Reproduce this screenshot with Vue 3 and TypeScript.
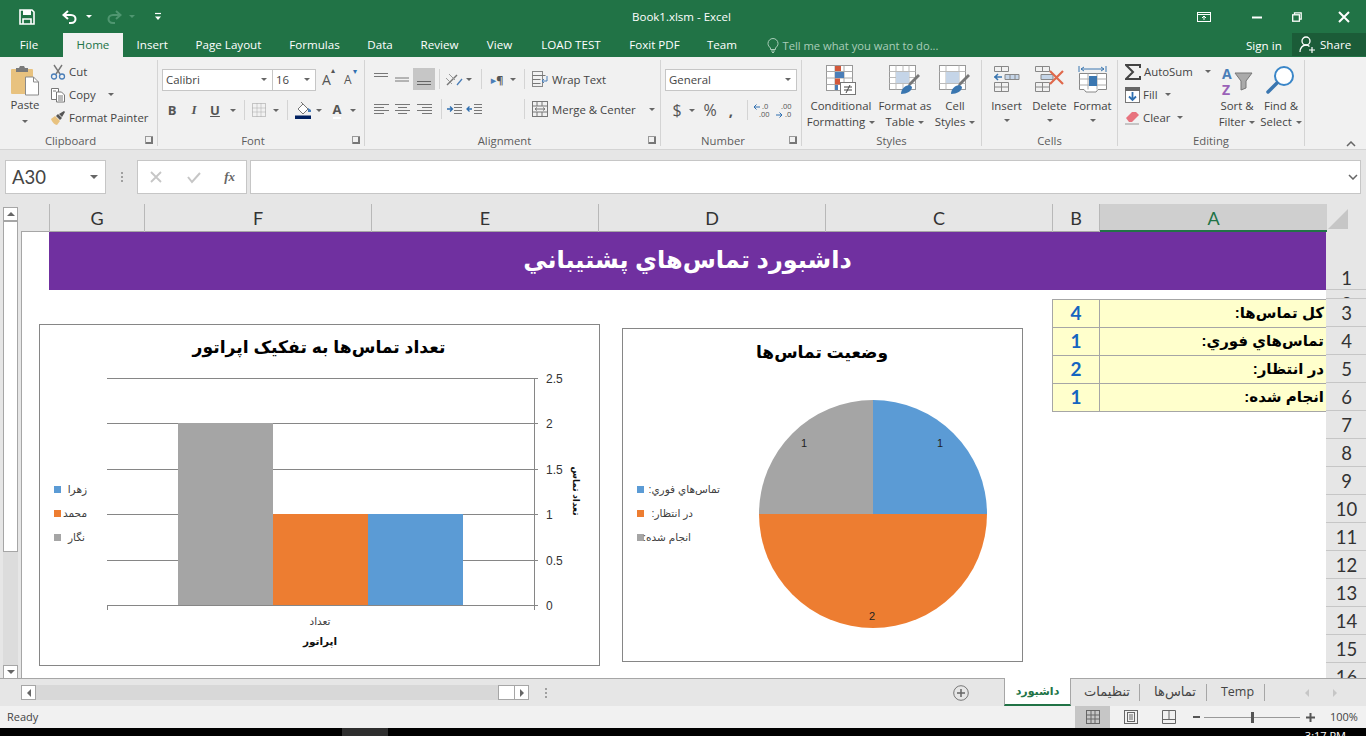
<script setup lang="ts">
const tabs: string[] = ['File', 'Home', 'Insert', 'Page Layout', 'Formulas', 'Data', 'Review', 'View', 'LOAD TEST', 'Foxit PDF', 'Team']
const columns: string[] = ['', 'G', 'F', 'E', 'D', 'C', 'B', 'A']
const rows: number[] = [1, 2, 3, 4, 5, 6, 7, 8, 9, 10, 11, 12, 13, 14, 15, 16]
const kpis = [
  { label: 'کل تماس‌ها:', value: 4 },
  { label: 'تماس‌هاي فوري:', value: 1 },
  { label: 'در انتظار:', value: 2 },
  { label: 'انجام شده:', value: 1 },
]
const gridY: number[] = [378, 423, 469, 514, 560, 605]
const axisLabels: string[] = ['2.5', '2', '1.5', '1', '0.5', '0']
</script>

<template>
  <div class="app">
    <header class="titlebar">
      <div class="qat">
        <svg class="q-save" width="16" height="16" viewBox="0 0 16 16"><path d="M1 1h12l2 2v12H1z" fill="none" stroke="#fff" stroke-width="1.6"/><path d="M4 1h8v5H4z" fill="#fff"/><path d="M4 15v-5h8v5" fill="none" stroke="#fff" stroke-width="1.6"/></svg>
        <svg class="q-undo" width="16" height="14" viewBox="0 0 16 14"><path d="M6 1L1.5 5 6 9" fill="none" stroke="#fff" stroke-width="2"/><path d="M2 5h7c6 0 6 8 0 8H7" fill="none" stroke="#fff" stroke-width="2"/></svg>
        <i class="caret white q-c1"></i>
        <svg class="q-redo" width="16" height="14" viewBox="0 0 16 14"><path d="M10 1l4.500 4L10 9" fill="none" stroke="#4f9670" stroke-width="2"/><path d="M14 5H7c-6 0-6 8 0 8h2" fill="none" stroke="#4f9670" stroke-width="2"/></svg>
        <i class="caret faded q-c2"></i>
        <svg class="q-more" width="8" height="10" viewBox="0 0 8 10"><path d="M1 1.500h6" stroke="#fff" stroke-width="1.200"/><path d="M1 4.500h6L4 8z" fill="#fff"/></svg>
      </div>
      <div class="doc-title">Book1.xlsm - Excel</div>
      <div class="winbtns">
        <svg class="w-rib" width="14" height="10" viewBox="0 0 14 10"><rect x=".5" y=".5" width="13" height="9" fill="none" stroke="#fff"/><path d="M1 2.500h12" stroke="#fff"/><path d="M7 8V4.500M5 6l2-2 2 2" fill="none" stroke="#fff"/></svg>
        <svg class="w-min" width="10" height="3" viewBox="0 0 10 3"><path d="M0 1.500h10" stroke="#fff" stroke-width="2"/></svg>
        <svg class="w-res" width="10" height="10" viewBox="0 0 10 10"><path d="M2.500 2.500V.8h6.700v6.400H7.500" fill="none" stroke="#fff" stroke-width="1.300"/><rect x=".7" y="2.800" width="6.700" height="6.400" fill="none" stroke="#fff" stroke-width="1.300"/></svg>
        <svg class="w-close" width="12" height="12" viewBox="0 0 12 12"><path d="M1 1l10 10M11 1L1 11" stroke="#fff" stroke-width="2"/></svg>
      </div>
    </header>

    <nav class="tabbar">
      <div v-for="t in tabs" :key="t" class="tab" :class="{ active: t === 'Home', file: t === 'File' }">{{ t }}</div>
      <svg class="bulb" width="12" height="15" viewBox="0 0 12 15"><path d="M3.500 10C2 8.500 1 7.500 1 5.500a5 5 0 0 1 10 0c0 2-1 3-2.500 4.500v1.500h-5z" fill="none" stroke="#a9cdb9"/><path d="M4 13h4M5 14.500h2" stroke="#a9cdb9"/></svg>
      <div class="tell">Tell me what you want to do...</div>
      <div class="signin">Sign in</div>
      <div class="share">
        <svg width="18" height="17" viewBox="0 0 18 17"><circle cx="7" cy="5" r="4" fill="none" stroke="#fff" stroke-width="1.300"/><path d="M1 16c0-4 2.500-7 6-7 1.500 0 2.500.5 3.500 1.500" fill="none" stroke="#fff" stroke-width="1.300"/><path d="M10 14h6M13 11v6" stroke="#fff" stroke-width="1.200"/></svg>
        <span>Share</span>
      </div>
    </nav>

    <section class="ribbon">
      <!-- Clipboard -->
      <div class="group g-clip">
        <div class="body clip-body">
          <div class="big paste">
            <svg width="30" height="31" viewBox="0 0 30 31"><rect x="1" y="4" width="22" height="25" rx="1" fill="#e8c27f"/><path d="M6 3h3l1-2h4l1 2h3v4H6z" fill="#7a7a7a"/><path d="M15.500 12h8l5 5v13h-13z" fill="#fff" stroke="#8a8a8a"/><path d="M23.500 12v5h5" fill="none" stroke="#8a8a8a"/></svg>
            <span class="paste-label">Paste</span>
            <i class="caret"></i>
          </div>
          <div class="clip-list">
            <div class="clip-row">
              <svg width="16" height="16" viewBox="0 0 16 16"><path d="M4 1l6 9M12 1L6 10" stroke="#777" stroke-width="1.400"/><circle cx="4" cy="12.500" r="2.500" fill="none" stroke="#4a7eb8" stroke-width="1.300"/><circle cx="12" cy="12.500" r="2.500" fill="none" stroke="#4a7eb8" stroke-width="1.300"/></svg>
              <span>Cut</span>
            </div>
            <div class="clip-row">
              <svg width="16" height="16" viewBox="0 0 16 16"><path d="M1.500 1.500h7v11h-7z" fill="#fff" stroke="#777"/><path d="M6.500 5h5l3 3v7h-8z" fill="#fff" stroke="#777"/><path d="M8 9h5M8 11h5M8 13h5M3 4h3" stroke="#777"/></svg>
              <span>Copy</span>
              <i class="caret copy-caret"></i>
            </div>
            <div class="clip-row">
              <svg width="16" height="16" viewBox="0 0 16 16"><path d="M1 9l4-3 5 5-3 4c-2 0-5-3-6-6z" fill="#e8c27f"/><path d="M6 6l2-2 4 4-2 2z" fill="#555"/><path d="M9 4l5-3 1 1-3 5z" fill="#555"/></svg>
              <span>Format Painter</span>
            </div>
          </div>
        </div>
        <div class="glabel">Clipboard</div>
        <i class="launch"></i>
      </div>

      <!-- Font -->
      <div class="group g-font">
        <div class="body stack">
          <div class="font-r1">
            <div class="combo font-name"><span>Calibri</span><i class="caret"></i></div>
            <div class="combo font-size"><span>16</span><i class="caret"></i></div>
            <span class="grow-a">A<sup>▴</sup></span>
            <span class="shrink-a">A<sup class="blue">▾</sup></span>
          </div>
          <div class="font-r2">
            <b class="fmt">B</b>
            <i class="fmt ital">I</i>
            <u class="fmt und">U</u>
            <i class="caret"></i>
            <i class="vsep"></i>
            <svg width="14" height="14" viewBox="0 0 14 14"><rect x=".5" y=".5" width="13" height="13" fill="none" stroke="#999" stroke-dasharray="1 1"/><path d="M.5 5h13M.5 9h13M5 .5v13M9 .5v13" stroke="#aaa" stroke-dasharray="1 1"/></svg>
            <i class="caret"></i>
            <i class="vsep"></i>
            <svg width="17" height="18" viewBox="0 0 17 18"><path d="M3 8l5-5 5 5-5 5z" fill="#fff" stroke="#777"/><path d="M6 1l2 2" stroke="#777"/><path d="M13 7l3 2v2h-3z" fill="#4a7eb8"/><rect y="14.500" width="16" height="3.500" fill="#002060"/></svg>
            <i class="caret"></i>
            <span class="color-a">A</span>
            <i class="caret"></i>
          </div>
        </div>
        <div class="glabel">Font</div>
        <i class="launch"></i>
      </div>

      <!-- Alignment -->
      <div class="group g-align">
        <div class="body stack">
          <div class="al-r1">
            <svg class="lines" width="14" height="14" viewBox="0 0 14 14"><path d="M0 1.500h14M0 4.500h14" stroke="#777"/></svg>
            <svg class="lines" width="14" height="14" viewBox="0 0 14 14"><path d="M0 6h14M0 9h14" stroke="#777"/></svg>
            <div class="sel-cell"><svg width="14" height="14" viewBox="0 0 14 14"><path d="M0 9.500h14M0 12.500h14" stroke="#666"/></svg></div>
            <i class="vsep"></i>
            <svg width="18" height="15" viewBox="0 0 18 15"><path d="M2 13L12 3" stroke="#777" stroke-width="1.500"/><path d="M1 6l6 6M4 2l6 6" stroke="#999"/><path d="M12 13l5-6" stroke="#4a7eb8" stroke-width="1.300"/></svg>
            <i class="caret"></i>
            <i class="vsep"></i>
            <span class="rtl"><em>▸</em>¶</span>
            <i class="caret"></i>
            <i class="vsep"></i>
            <div class="ico-text">
              <svg width="16" height="16" viewBox="0 0 16 16"><rect x=".5" y=".5" width="10" height="15" fill="none" stroke="#888"/><path d="M.5 4.500h13M.5 8.500h8M.5 12.500h8" stroke="#777"/><path d="M15 5v5h-5M12 8l-2 2 2 2" fill="none" stroke="#4a7eb8"/></svg>
              <span>Wrap Text</span>
            </div>
          </div>
          <div class="al-r2">
            <svg width="15" height="13" viewBox="0 0 15 13"><path d="M0 1.500h15M0 4.500h10M0 7.500h15M0 10.500h10" stroke="#777"/></svg>
            <svg width="15" height="13" viewBox="0 0 15 13"><path d="M0 1.500h15M3 4.500h9M0 7.500h15M3 10.500h9" stroke="#777"/></svg>
            <svg width="15" height="13" viewBox="0 0 15 13"><path d="M0 1.500h15M5 4.500h10M0 7.500h15M5 10.500h10" stroke="#777"/></svg>
            <i class="vsep"></i>
            <svg width="15" height="13" viewBox="0 0 15 13"><path d="M7 1.500h8M7 4.500h8M7 7.500h8M7 10.500h8" stroke="#777"/><path d="M0 6h5M3 3.500L5.500 6 3 8.500" fill="none" stroke="#2f6fb0" stroke-width="1.300"/></svg>
            <svg width="16" height="13" viewBox="0 0 16 13"><path d="M8 1.500h8M8 4.500h8M8 7.500h8M8 10.500h8" stroke="#777"/><path d="M6 6H1M3.500 3.500L1 6l2.500 2.500" fill="none" stroke="#2f6fb0" stroke-width="1.300"/></svg>
            <span></span>
            <i class="vsep"></i>
            <div class="ico-text">
              <svg width="16" height="16" viewBox="0 0 16 16"><rect x=".5" y=".5" width="15" height="15" fill="none" stroke="#777"/><path d="M.5 5h15M.5 11h15M5 .5V5M10 .5V5M5 11v4.500M10 11v4.500" stroke="#777"/><path d="M3 8h10M5 6.500L3 8l2 1.500M11 6.500L13 8l-2 1.500" fill="none" stroke="#777"/></svg>
              <span>Merge &amp; Center</span>
              <i class="caret merge-caret"></i>
            </div>
          </div>
        </div>
        <div class="glabel">Alignment</div>
        <i class="launch"></i>
      </div>

      <!-- Number -->
      <div class="group g-num">
        <div class="body stack">
          <div class="num-r1"><div class="combo num-fmt"><span>General</span><i class="caret"></i></div></div>
          <div class="num-r2">
            <span class="sym dollar">$</span>
            <i class="caret"></i>
            <span class="sym pct">%</span>
            <span class="sym comma">,</span>
            <i class="vsep"></i>
            <svg width="18" height="20" viewBox="0 0 18 20"><text x="8" y="9" class="dec">.0</text><text x="5" y="17" class="dec">.00</text><path d="M0 7h6M2.500 4.500L0 7l2.500 2.500" fill="none" stroke="#2f6fb0"/></svg>
            <svg width="18" height="20" viewBox="0 0 18 20"><text x="5" y="9" class="dec">.00</text><text x="9" y="17" class="dec">.0</text><path d="M0 15h6M3.500 12.500L6 15l-2.500 2.500" fill="none" stroke="#2f6fb0"/></svg>
          </div>
        </div>
        <div class="glabel">Number</div>
        <i class="launch"></i>
      </div>

      <!-- Styles -->
      <div class="group g-styles">
        <div class="body bigs styles-body">
          <div class="big cond">
            <svg width="30" height="30" viewBox="0 0 30 30"><rect x=".5" y=".5" width="26" height="25" fill="#fff" stroke="#999"/><path d="M.5 6.500h26M.5 13h26M.5 19.500h26M9 .5v25M18 .5v25" stroke="#aaa"/><path d="M9 1h6v5H9z" fill="#d2583b"/><path d="M9 7h9v6H9z" fill="#4a7eb8"/><path d="M9 13.500h5v6H9z" fill="#d2583b"/><path d="M9 20h3v5H9z" fill="#4a7eb8"/><rect x="14.500" y="17.500" width="15" height="12" fill="#fff" stroke="#777"/><path d="M18 22h8M18 25h8M24 20l-4 8" stroke="#444"/></svg>
            <span>Conditional</span>
            <span>Formatting<i class="caret inl"></i></span>
          </div>
          <div class="big fmt-table">
            <svg width="32" height="30" viewBox="0 0 32 30"><rect x=".5" y=".5" width="26" height="24" fill="#fff" stroke="#999"/><path d="M.5 6.500h26M.5 12.500h26M.5 18.500h26M7 .5v24M14 .5v24M20 .5v24" stroke="#bbb"/><path d="M7 7h13v11H7z" fill="#c5d5e8"/><path d="M29 9L20 18l-1 3 3-1 9-9z" fill="#777"/><path d="M12 29c0-5 4-9 9-9l2 2c0 4-5 7-11 7z" fill="#3a76b0"/></svg>
            <span>Format as</span>
            <span>Table<i class="caret inl"></i></span>
          </div>
          <div class="big cellst">
            <svg width="32" height="30" viewBox="0 0 32 30"><rect x=".5" y=".5" width="26" height="24" fill="#fff" stroke="#999"/><path d="M.5 6.500h26M7 .5v24M20 .5v24M.5 18.500h26" stroke="#bbb"/><path d="M7 7h13v11H7z" fill="#c5d5e8"/><path d="M29 9L20 18l-1 3 3-1 9-9z" fill="#777"/><path d="M12 29c0-5 4-9 9-9l2 2c0 4-5 7-11 7z" fill="#3a76b0"/></svg>
            <span>Cell</span>
            <span>Styles<i class="caret inl"></i></span>
          </div>
        </div>
        <div class="glabel">Styles</div>
      </div>

      <!-- Cells -->
      <div class="group g-cells">
        <div class="body bigs cells-body">
          <div class="big c-ins">
            <svg width="28" height="28" viewBox="0 0 28 28"><path d="M1.500 1.500h14v5h-14zM8.500 1.500v5M1.500 17.500h14v9h-14zM1.500 22h14M8.500 17.500v9" fill="none" stroke="#888"/><path d="M12 9.500h14v5H12zM17 9.500v5M22 9.500v5" fill="#c5d5e8" stroke="#888"/><path d="M1 12h8M5 9l-3 3 3 3" fill="none" stroke="#3a76b0" stroke-width="1.500"/></svg>
            <span>Insert</span><i class="caret"></i>
          </div>
          <div class="big c-del">
            <svg width="32" height="28" viewBox="0 0 32 28"><path d="M1.500 1.500h14v5h-14zM8.500 1.500v5M1.500 17.500h14v9h-14zM1.500 22h14M8.500 17.500v9" fill="none" stroke="#888"/><path d="M7 9.500h12v5H7z" fill="#c5d5e8" stroke="#888"/><path d="M16 6l13 13M29 6L16 19" stroke="#e0684b" stroke-width="2.200"/></svg>
            <span>Delete</span><i class="caret"></i>
          </div>
          <div class="big c-fmt">
            <svg width="30" height="30" viewBox="0 0 30 30"><path d="M1 1v6M28 1v6M3 4h23M3 4l3-2M3 4l3 2M26 4l-3-2M26 4l-3 2" fill="none" stroke="#3a76b0"/><path d="M1.500 8.500h27v16H20l-2 2.500H8l-2-2.500H1.500z" fill="#fff" stroke="#888"/><path d="M1.500 14h27M1.500 20h27M10 8.500v16M19 8.500v16" stroke="#aaa"/><rect x="11" y="11" width="8" height="10" fill="#3a76b0"/></svg>
            <span class="fmt-lab">Format</span><i class="caret"></i>
          </div>
        </div>
        <div class="glabel">Cells</div>
      </div>

      <!-- Editing -->
      <div class="group g-edit">
        <div class="body edit-body">
          <div class="clip-list edit-list">
            <div class="clip-row">
              <svg width="16" height="16" viewBox="0 0 16 16"><path d="M15 4V1H1l7 7-7 7h14v-3" fill="none" stroke="#444" stroke-width="2"/></svg>
              <span>AutoSum</span>
              <i class="caret auto-caret"></i>
            </div>
            <div class="clip-row">
              <svg width="15" height="16" viewBox="0 0 15 16"><rect x=".5" y=".5" width="14" height="15" fill="#fff" stroke="#777"/><rect width="15" height="4" fill="#666"/><path d="M7.500 5v8M4 9.500l3.500 3.500L11 9.500" fill="none" stroke="#2f6fb0" stroke-width="1.800"/></svg>
              <span>Fill</span><i class="caret inl"></i>
            </div>
            <div class="clip-row">
              <svg width="15" height="15" viewBox="0 0 15 15"><path d="M1 8l6-6h4l3 3-7 7H4z" fill="#e8737e"/><path d="M0 14h14" stroke="#999"/></svg>
              <span>Clear</span><i class="caret inl"></i>
            </div>
          </div>
          <div class="big sortf">
            <svg width="32" height="34" viewBox="0 0 32 34"><text x="1" y="16" class="az a">A</text><text x="1" y="32" class="az z">Z</text><path d="M14 10h17l-6 8v7l-5 2v-9z" fill="#aaa" stroke="#777"/></svg>
            <span>Sort &amp;</span>
            <span>Filter<i class="caret inl"></i></span>
          </div>
          <div class="big findsel">
            <svg width="30" height="30" viewBox="0 0 30 30"><circle cx="18" cy="11" r="9" fill="#fff" stroke="#3a86c8" stroke-width="2"/><path d="M11 18L2 27" stroke="#3a76b0" stroke-width="3.500" stroke-linecap="round"/></svg>
            <span>Find &amp;</span>
            <span>Select<i class="caret inl"></i></span>
          </div>
        </div>
        <div class="glabel">Editing</div>
      </div>
      <div class="collapse">
        <svg width="10" height="6" viewBox="0 0 10 6"><path d="M1 5l4-4 4 4" fill="none" stroke="#666" stroke-width="1.500"/></svg>
      </div>
    </section>

    <section class="formula">
      <div class="namebox"><span>A30</span><i class="caret big-caret"></i></div>
      <div class="dots"><i></i><i></i><i></i></div>
      <div class="fxbox">
        <svg width="14" height="14" viewBox="0 0 14 14"><path d="M2 2l10 10M12 2L2 12" stroke="#c6c6c6" stroke-width="1.800"/></svg>
        <svg width="16" height="14" viewBox="0 0 16 14"><path d="M2 7l4 5 8-9" fill="none" stroke="#c6c6c6" stroke-width="2"/></svg>
        <span class="fx">fx</span>
      </div>
      <div class="input">
        <svg width="10" height="6" viewBox="0 0 10 6"><path d="M1 1l4 4 4-4" fill="none" stroke="#666" stroke-width="1.500"/></svg>
      </div>
    </section>

    <section class="gridarea">
      <div class="vscroll">
        <div class="sbtn"><i class="tri-up"></i></div>
        <div class="vthumb"></div>
        <div class="vtrack"></div>
        <div class="sbtn down"><i class="tri-down"></i></div>
      </div>
      <div class="sheetwrap">
        <div class="colhead">
          <div v-for="c in columns" :key="c" class="col" :class="{ sel: c === 'A' }">{{ c }}</div>
          <div class="corner"><i></i></div>
        </div>
        <div class="sheetbody">
          <div class="canvas">
            <div class="banner">داشبورد تماس‌هاي پشتيباني</div>
            <div class="kpis">
              <div v-for="k in kpis" :key="k.label" class="kpi">
                <div class="kpi-val">{{ k.value }}</div>
                <div class="kpi-lab">{{ k.label }}</div>
              </div>
            </div>

            <svg class="chart chart-left" viewBox="39 324 561 342">
              <rect x="39.500" y="324.500" width="560" height="341" fill="#fff" stroke="#868686"/>
              <text x="319" y="353" class="ct" text-anchor="middle">تعداد تماس‌ها به تفکيک اپراتور</text>
              <path v-for="y in gridY" :key="y" :d="`M107 ${y + 0.5}H538`" stroke="#868686"/>
              <path d="M534.500 378V610M107.500 605v5" stroke="#868686" fill="none"/>
              <rect x="178" y="423" width="95" height="182" fill="#a5a5a5"/>
              <rect x="273" y="514" width="95" height="91" fill="#ed7d31"/>
              <rect x="368" y="514" width="95" height="91" fill="#5b9bd5"/>
              <text v-for="(l, i) in axisLabels" :key="l" x="546" :y="gridY[i] + 5" class="tick">{{ l }}</text>
              <rect x="54" y="486" width="7" height="7" fill="#5b9bd5"/>
              <rect x="54" y="510" width="7" height="7" fill="#ed7d31"/>
              <rect x="54" y="534" width="7" height="7" fill="#a5a5a5"/>
              <text x="87" y="493" class="leg" text-anchor="start">زهرا</text>
              <text x="87" y="517" class="leg" text-anchor="start">محمد</text>
              <text x="85" y="541" class="leg" text-anchor="start">نگار</text>
              <text x="320" y="625" class="leg" text-anchor="middle">تعداد</text>
              <text x="320" y="645" class="leg bold" text-anchor="middle">اپراتور</text>
              <text transform="translate(573 491) rotate(90)" class="leg bold rot" text-anchor="middle">تعداد تماس</text>
            </svg>

            <svg class="chart chart-right" viewBox="622 328 401 334">
              <rect x="622.500" y="328.500" width="400" height="333" fill="#fff" stroke="#868686"/>
              <text x="822" y="358" class="ct small-t" text-anchor="middle">وضعيت تماس‌ها</text>
              <path d="M873 514V400A114 114 0 0 1 987 514z" fill="#5b9bd5"/>
              <path d="M987 514A114 114 0 0 1 759 514z" fill="#ed7d31"/>
              <path d="M759 514A114 114 0 0 1 873 400V514z" fill="#a5a5a5"/>
              <text x="940" y="447" class="tick small" text-anchor="middle">1</text>
              <text x="804" y="447" class="tick small" text-anchor="middle">1</text>
              <text x="872" y="620" class="tick small" text-anchor="middle">2</text>
              <rect x="637" y="486" width="7" height="7" fill="#5b9bd5"/>
              <rect x="637" y="510" width="7" height="7" fill="#ed7d31"/>
              <rect x="637" y="534" width="7" height="7" fill="#a5a5a5"/>
              <text x="720" y="493" class="leg" text-anchor="start">تماس‌هاي فوري:</text>
              <text x="693" y="517" class="leg" text-anchor="start">در انتظار:</text>
              <text x="691" y="541" class="leg" text-anchor="start">انجام شده:</text>
            </svg>
          </div>
          <div class="rowhead">
            <div v-for="r in rows" :key="r" class="row" :class="`r${r}`">{{ r }}</div>
          </div>
        </div>
      </div>
    </section>

    <section class="sheetbar">
      <div class="hscroll">
        <div class="hbtn"><i class="tri-left"></i></div>
        <div class="htrack"></div>
        <div class="hthumb"></div>
        <div class="hbtn"><i class="tri-right"></i></div>
      </div>
      <div class="hdots"><i></i><i></i><i></i></div>
      <div class="addsheet">
        <svg width="16" height="16" viewBox="0 0 16 16"><circle cx="8" cy="8" r="7.300" fill="none" stroke="#777"/><path d="M8 4v8M4 8h8" stroke="#666" stroke-width="1.500"/></svg>
      </div>
      <div class="stab active">داشبورد</div>
      <div class="stab s-set">تنظيمات</div>
      <div class="stab s-con">تماس‌ها</div>
      <div class="stab s-temp">Temp</div>
      <div class="navs"><i class="tri-left light"></i><i class="tri-right light"></i></div>
    </section>

    <footer class="status">
      <span class="ready">Ready</span>
      <div class="views">
        <div class="vw on"><svg width="14" height="14" viewBox="0 0 14 14"><rect x=".5" y=".5" width="13" height="13" fill="none" stroke="#666"/><path d="M5 .5v13M9 .5v13M.5 5h13M.5 9h13" stroke="#666"/></svg></div>
        <div class="vw v2"><svg width="14" height="14" viewBox="0 0 14 14"><rect x=".5" y=".5" width="13" height="13" fill="none" stroke="#666"/><rect x="3.500" y="2.500" width="7" height="9" fill="none" stroke="#666"/><path d="M5 5h4M5 7h4M5 9h4" stroke="#666"/></svg></div>
        <div class="vw v3"><svg width="14" height="14" viewBox="0 0 14 14"><path d="M.5 13.500V.5h13v13zM.5 9.500h13M7 .5v9" fill="none" stroke="#666"/></svg></div>
      </div>
      <div class="zoom">
        <i class="z-minus"></i>
        <div class="z-track"><i class="z-thumb"></i></div>
        <svg width="9" height="9" viewBox="0 0 9 9"><path d="M0 4.500h9M4.500 0v9" stroke="#555" stroke-width="2"/></svg>
      </div>
      <span class="pct100">100%</span>
    </footer>
    <div class="taskbar">
      <i class="task-app"></i>
      <span class="clock">3:17 PM</span>
    </div>
  </div>
</template>

<style>
html, body { margin: 0; padding: 0; background: #000; }
</style>

<style scoped>
.app { width: 1366px; height: 736px; overflow: hidden; display: flex; flex-direction: column; font-family: "Open Sans", "DejaVu Sans", sans-serif; font-size: 11.4px; color: #444; background: #f1f1f1; }
i { display: block; font-style: normal; }
.caret { width: 0; height: 0; border-left: 3px solid transparent; border-right: 3px solid transparent; border-top: 3px solid #666; flex: none; }
.caret.white { border-top-color: #fff; }
.caret.faded { border-top-color: #4f9670; }
.caret.inl { display: inline-block; margin-left: 4px; vertical-align: middle; }

/* title */
.titlebar { height: 33px; background: #217346; display: flex; align-items: center; position: relative; flex: none; }
.qat { display: flex; align-items: center; width: 400px; height: 100%; padding-left: 19px; box-sizing: border-box; }
.q-undo { margin-left: 27px; }
.q-c1 { margin-left: 8px; }
.q-redo { margin-left: 14px; }
.q-c2 { margin-left: 7px; }
.q-more { margin-left: 19px; }
.doc-title { position: absolute; left: 0; width: 1363px; text-align: center; color: #fff; font-size: 11.5px; }
.winbtns { margin-left: auto; display: flex; align-items: center; position: relative; padding-right: 16px; }
.w-min { margin-left: 41px; margin-top: 2px; }
.w-res { margin-left: 30px; }
.w-close { margin-left: 36px; }

/* tabs */
.tabbar { height: 24px; background: #217346; display: grid; grid-template-columns: 63px 60px 58.500px 94px 78px 53px 66px 54px 89px 78px 57px 28px 170px 1fr 46px 74px; align-items: center; color: #fff; font-size: 11.6px; flex: none; }
.tab { text-align: center; height: 24px; line-height: 23px; }
.tab.file { padding-right: 5px; box-sizing: border-box; }
.tab.active { background: #f1f1f1; color: #217346; }
.bulb { grid-column: 12; justify-self: end; }
.tell { grid-column: 13; color: #a9cdb9; white-space: nowrap; padding-left: 4px; font-size: 11.2px; }
.signin { grid-column: 15; }
.share { grid-column: 16; background: #1b5c38; height: 23px; display: flex; align-items: center; gap: 3px; padding-left: 7px; align-self: start; }

/* ribbon */
.ribbon { height: 93px; background: #f1f1f1; border-bottom: 1px solid #d4d4d4; box-sizing: border-box; display: flex; flex: none; padding-top: 3px; }
.group { position: relative; display: flex; flex-direction: column; border-right: 1px solid #d4d4d4; box-sizing: border-box; height: 86px; }
.body { flex: 1; min-height: 0; }
.glabel { height: 14px; line-height: 18px; text-align: center; color: #5c5c5c; font-size: 11.300px; padding-right: 16px; }
.launch { position: absolute; right: 4px; bottom: 2px; width: 7px; height: 7px; border-left: 1px solid #999; border-top: 1px solid #999; box-shadow: inset -3px -3px 0 -1px #777; }
.g-clip { width: 158px; }
.g-font { width: 207px; }
.g-align { width: 296px; }
.g-num { width: 141px; }
.g-styles { width: 180px; }
.g-cells { width: 136px; }
.g-edit { width: 187px; }
.collapse { flex: 1; display: flex; justify-content: flex-end; align-items: flex-end; padding: 0 10px 2px 0; }
.g-styles .glabel, .g-cells .glabel, .g-edit .glabel { padding-right: 0; }
.big { display: flex; flex-direction: column; align-items: center; line-height: 16px; white-space: nowrap; }
.big svg { margin-bottom: 3px; }
.clip-body { display: flex; }
.paste { width: 50px; padding-top: 5px; }
.paste svg { margin-bottom: 1px; }
.paste .caret { margin-top: 7px; }
.clip-list { display: flex; flex-direction: column; }
.clip-row { display: flex; align-items: center; gap: 3px; height: 23px; white-space: nowrap; }
.copy-caret { margin-left: 9px; }
.stack { display: flex; flex-direction: column; }
.font-r1, .num-r1 { display: flex; align-items: center; height: 23px; margin-top: 8px; }
.font-r1 { padding-left: 4px; }
.combo { height: 22px; background: #fff; border: 1px solid #c6c6c6; box-sizing: border-box; display: flex; align-items: center; justify-content: space-between; padding: 0 5px 0 3px; }
.font-name { width: 111px; }
.font-size { width: 44px; margin-left: -1px; }
.grow-a, .shrink-a { font-size: 14px; position: relative; color: #555; display: block; width: 14px; }
.grow-a { margin-left: 6px; }
.shrink-a { margin-left: 8px; font-size: 12px; }
.grow-a sup, .shrink-a sup { position: absolute; left: 9px; top: -6px; font-size: 8px; }
.shrink-a sup.blue { color: #2f6fb0; }
.font-r2 { display: grid; grid-template-columns: 22px 22px 20px 15px 8px 22px 12px 10px 22px 10px 26px 6px; padding-left: 3px; align-items: center; justify-items: center; margin-top: 8px; height: 22px; }
.fmt { font-size: 13px; color: #555; font-family: "Open Sans", sans-serif; }
.ital { font-style: italic; font-weight: 700; font-family: "Liberation Serif", serif; }
.und { font-weight: 700; text-decoration: underline; }
.vsep { width: 1px; height: 20px; background: #d4d4d4; }
.color-a { font-weight: 700; font-size: 13px; color: #555; border-bottom: 2px solid #fff; line-height: 15px; }
.al-r1 { display: grid; grid-template-columns: 20px 21px 23px 8px 22px 8px 16px 16px 16px 6px 1fr; padding-left: 6px; align-items: center; justify-items: center; margin-top: 8px; height: 22px; }
.al-r2 { display: grid; grid-template-columns: 20px 22px 22px 12px 15px 23px 36px 6px 1fr; padding-left: 6px; align-items: center; justify-items: center; margin-top: 8px; height: 22px; }
.sel-cell { width: 22px; height: 22px; background: #c6c6c6; display: flex; align-items: center; justify-content: center; }
.rtl { color: #555; font-size: 11px; font-weight: 700; white-space: nowrap; }
.rtl em { font-style: normal; color: #4a7eb8; }
.ico-text { display: flex; align-items: center; gap: 4px; justify-self: start; white-space: nowrap; margin-left: 5px; }
.merge-caret { margin-left: 9px; }
.num-r1 { padding-left: 4px; }
.num-fmt { width: 132px; }
.num-r2 { display: grid; grid-template-columns: 26px 4px 32px 10px 22px 10px 34px; padding-left: 3px; align-items: center; justify-items: center; margin-top: 8px; height: 22px; }
.sym { font-size: 16px; color: #555; }
.comma { font-weight: 700; font-size: 15px; line-height: 12px; }
.dec { font: 7.500px "Open Sans", sans-serif; fill: #555; }
.bigs { display: flex; }
.styles-body { padding-top: 5px; }
.styles-body .cond { width: 78px; }
.styles-body .fmt-table { width: 60px; margin-left: -5px; }
.styles-body .cellst { width: 40px; }
.cells-body { padding-top: 5px; padding-left: 3px; }
.cells-body .big { width: 43px; }
.cells-body .big span { margin-top: 2px; }
.cells-body .big span.fmt-lab { margin-top: 0; }
.cells-body .caret { margin-top: 5px; }
.edit-body { display: flex; padding-left: 7px; }
.edit-list { width: 90px; }
.auto-caret { margin-left: 9px; }
.findsel { padding-top: 5px; width: 44px; }
.sortf { padding-top: 3px; width: 44px; }
.sortf svg { margin-bottom: 1px; }
.az { font: 700 14px "Open Sans", sans-serif; }
.az.a { fill: #4a7eb8; }
.az.z { fill: #9a62b8; }

/* formula */
.formula { height: 54px; background: #e6e6e6; flex: none; display: flex; align-items: flex-start; padding: 10px 0 0 5px; box-sizing: border-box; }
.namebox { width: 101px; height: 34px; background: #fff; border: 1px solid #c6c6c6; box-sizing: border-box; display: flex; align-items: center; justify-content: space-between; padding: 0 7px 0 6px; font: 18.500px "Lato", sans-serif; color: #444; }
.big-caret { border-left-width: 4px; border-right-width: 4px; border-top-width: 4px; }
.dots { width: 31px; height: 34px; display: flex; flex-direction: column; align-items: center; justify-content: center; gap: 2px; }
.dots i, .hdots i { width: 2px; height: 2px; background: #a0a0a0; }
.fxbox { width: 110px; height: 34px; background: #fff; border: 1px solid #c6c6c6; box-sizing: border-box; display: flex; align-items: center; justify-content: space-between; padding: 0 11px 0 11px; }
.fx { font: italic 700 13px "Liberation Serif", serif; color: #666; }
.input { margin-left: 3px; width: 1111px; height: 34px; background: #fff; border: 1px solid #c6c6c6; box-sizing: border-box; display: flex; align-items: center; justify-content: flex-end; padding-right: 2px; }

/* grid */
.gridarea { height: 474px; display: flex; background: #e6e6e6; flex: none; }
.vscroll { width: 21px; display: flex; flex-direction: column; align-items: flex-start; padding: 3px 0 0 3px; box-sizing: border-box; }
.sbtn { width: 15px; height: 14px; background: #fff; border: 1px solid #a6a6a6; box-sizing: border-box; display: flex; align-items: center; justify-content: center; flex: none; }
.vthumb { width: 15px; height: 331px; background: #fff; border: 1px solid #a6a6a6; box-sizing: border-box; flex: none; }
.vtrack { width: 15px; height: 113px; background: #dcdcdc; flex: none; }
.tri-up { border-left: 4px solid transparent; border-right: 4px solid transparent; border-bottom: 4px solid #666; width: 0; height: 0; }
.tri-down { border-left: 4px solid transparent; border-right: 4px solid transparent; border-top: 4px solid #666; width: 0; height: 0; }
.tri-left { border-top: 4px solid transparent; border-bottom: 4px solid transparent; border-right: 4px solid #666; width: 0; height: 0; }
.tri-right { border-top: 4px solid transparent; border-bottom: 4px solid transparent; border-left: 4px solid #666; width: 0; height: 0; }
.tri-left.light { border-right-color: #c6c6c6; }
.tri-right.light { border-left-color: #c6c6c6; }
.sheetwrap { flex: 1; display: flex; flex-direction: column; min-width: 0; }
.colhead { height: 28px; display: grid; grid-template-columns: 29px 95px 227px 227px 227px 227px 47px 227px 40px; flex: none; box-sizing: border-box; border-bottom: 1px solid #a6a6a6; }
.col { font: 18px/29px "Lato", sans-serif; text-align: center; color: #333; border-right: 1px solid #b8b8b8; box-sizing: border-box; }
.col.sel { background: #cfcfcf; color: #217346; border-bottom: 2px solid #217346; height: 28px; border-right: none; }
.corner { display: flex; align-items: flex-end; padding: 0 0 4px 1px; background: #e6e6e6; }
.corner i { width: 0; height: 0; border-left: 20px solid transparent; border-bottom: 20px solid #c6c6c6; }
.sheetbody { flex: 1; display: flex; min-height: 0; }
.canvas { flex: 1; position: relative; background: #fff; display: flex; flex-direction: column; overflow: hidden; min-width: 0; border-left: 1px solid #a6a6a6; }
.banner { height: 58px; margin-left: 27px; background: #7030a0; color: #fff; font: 700 24px/56px "Liberation Sans", "DejaVu Sans", sans-serif; text-align: center; direction: rtl; flex: none; }
.kpis { width: 274px; margin: 9px 0 0 auto; flex: none; border-top: 1px solid #a6a6a6; border-left: 1px solid #a6a6a6; box-sizing: border-box; }
.kpi { display: grid; grid-template-columns: 47px 1fr; height: 28px; background: #ffc; border-bottom: 1px solid #a6a6a6; box-sizing: border-box; }
.kpi-val { border-right: 1px solid #a6a6a6; font: 700 19px/26px "Lato", sans-serif; color: #1565c0; text-align: center; }
.kpi-lab { font: 700 15px/26px "Liberation Sans", "DejaVu Sans", sans-serif; color: #000; direction: rtl; text-align: right; white-space: nowrap; padding-right: 2px; min-width: 0; }
.chart { position: absolute; display: block; }
.chart-left { left: 17px; top: 92px; width: 561px; height: 342px; }
.chart-right { left: 600px; top: 96px; width: 401px; height: 334px; }
.ct { font: 700 17.200px "Liberation Sans", "DejaVu Sans", sans-serif; fill: #000; direction: rtl; }
.small-t { font-size: 17px; }
.tick { font: 12px "Liberation Sans", sans-serif; fill: #333; }
.tick.small { font-size: 11px; fill: #222; }
.leg { font: 10.500px "Liberation Sans", "DejaVu Sans", sans-serif; fill: #404040; direction: rtl; }
.leg.bold { font-weight: 700; fill: #111; }
.leg.rot { font-size: 9px; }
.rowhead { width: 40px; flex: none; overflow: hidden; }
.row { height: 28px; box-sizing: border-box; border-bottom: 1px solid #c6c6c6; font: 18.500px/29px "Lato", sans-serif; text-align: center; color: #333; overflow: hidden; padding-left: 1px; }
.row.r1 { height: 58px; line-height: 92px; }
.row.r2 { height: 9px; line-height: 28px; }

/* sheet bar */
.sheetbar { height: 28px; background: #e6e6e6; border-top: 1px solid #a6a6a6; box-sizing: border-box; display: flex; flex: none; position: relative; }
.hscroll { display: flex; align-items: center; margin-left: 21px; height: 27px; }
.hbtn { width: 15px; height: 15px; background: #fff; border: 1px solid #a6a6a6; box-sizing: border-box; display: flex; align-items: center; justify-content: center; }
.htrack { width: 462px; height: 15px; background: #d8d8d8; }
.hthumb { width: 17px; height: 15px; background: #fff; border: 1px solid #a6a6a6; box-sizing: border-box; margin-right: -1px; }
.hdots { width: 34px; display: flex; flex-direction: column; align-items: center; justify-content: center; gap: 2px; }
.addsheet { margin-left: 390px; display: flex; align-items: center; height: 27px; }
.stab { height: 27px; font: 13px/26px "Liberation Sans", "DejaVu Sans", sans-serif; color: #444; text-align: center; box-sizing: border-box; direction: rtl; padding-left: 3px; }
.stab.active { margin-left: 35px; width: 67px; background: #fff; color: #217346; font-weight: 700; font-size: 11px; border-bottom: 2px solid #217346; border-left: 1px solid #a6a6a6; border-right: 1px solid #a6a6a6; margin-top: -1px; height: 28px; padding-left: 0; line-height: 27px; }
.s-set, .s-con, .s-temp { position: relative; }
.s-set::after, .s-con::after, .s-temp::after { content: ""; position: absolute; right: 0; top: 5px; height: 17px; width: 1px; background: #a6a6a6; }
.s-set { width: 69px; }
.s-con { width: 67px; }
.s-temp { width: 58px; font-family: "Open Sans", sans-serif; font-size: 12.500px; }
.navs { display: flex; align-items: center; gap: 24px; margin-left: 40px; }

/* status */
.status { height: 22px; background: #f1f1f1; display: flex; align-items: center; flex: none; font-size: 11px; color: #444; }
.ready { margin-left: 7px; width: 1068px; padding-bottom: 2px; }
.views { display: flex; height: 22px; }
.vw { display: flex; align-items: center; justify-content: center; }
.vw.on { width: 35px; background: #c6c6c6; }
.vw.v2 { width: 42px; }
.vw.v3 { width: 34px; }
.zoom { display: flex; align-items: center; margin-left: 7px; }
.z-minus { width: 7px; height: 2px; background: #555; }
.z-track { position: relative; width: 96px; height: 1px; background: #999; margin: 0 6px 0 4px; }
.z-thumb { position: absolute; left: 47px; top: -5px; width: 3px; height: 11px; background: #555; }
.pct100 { margin-left: 15px; padding-bottom: 2px; }

/* taskbar */
.taskbar { height: 8px; background: #000; flex: none; overflow: hidden; position: relative; display: flex; }
.task-app { width: 46px; height: 8px; margin-left: 342px; background: #2e2e2e; }
.clock { margin-left: auto; margin-right: 20px; color: #fff; font: 11px/14px "Open Sans", sans-serif; height: 8px; padding-top: 1px; box-sizing: border-box; }
</style>
